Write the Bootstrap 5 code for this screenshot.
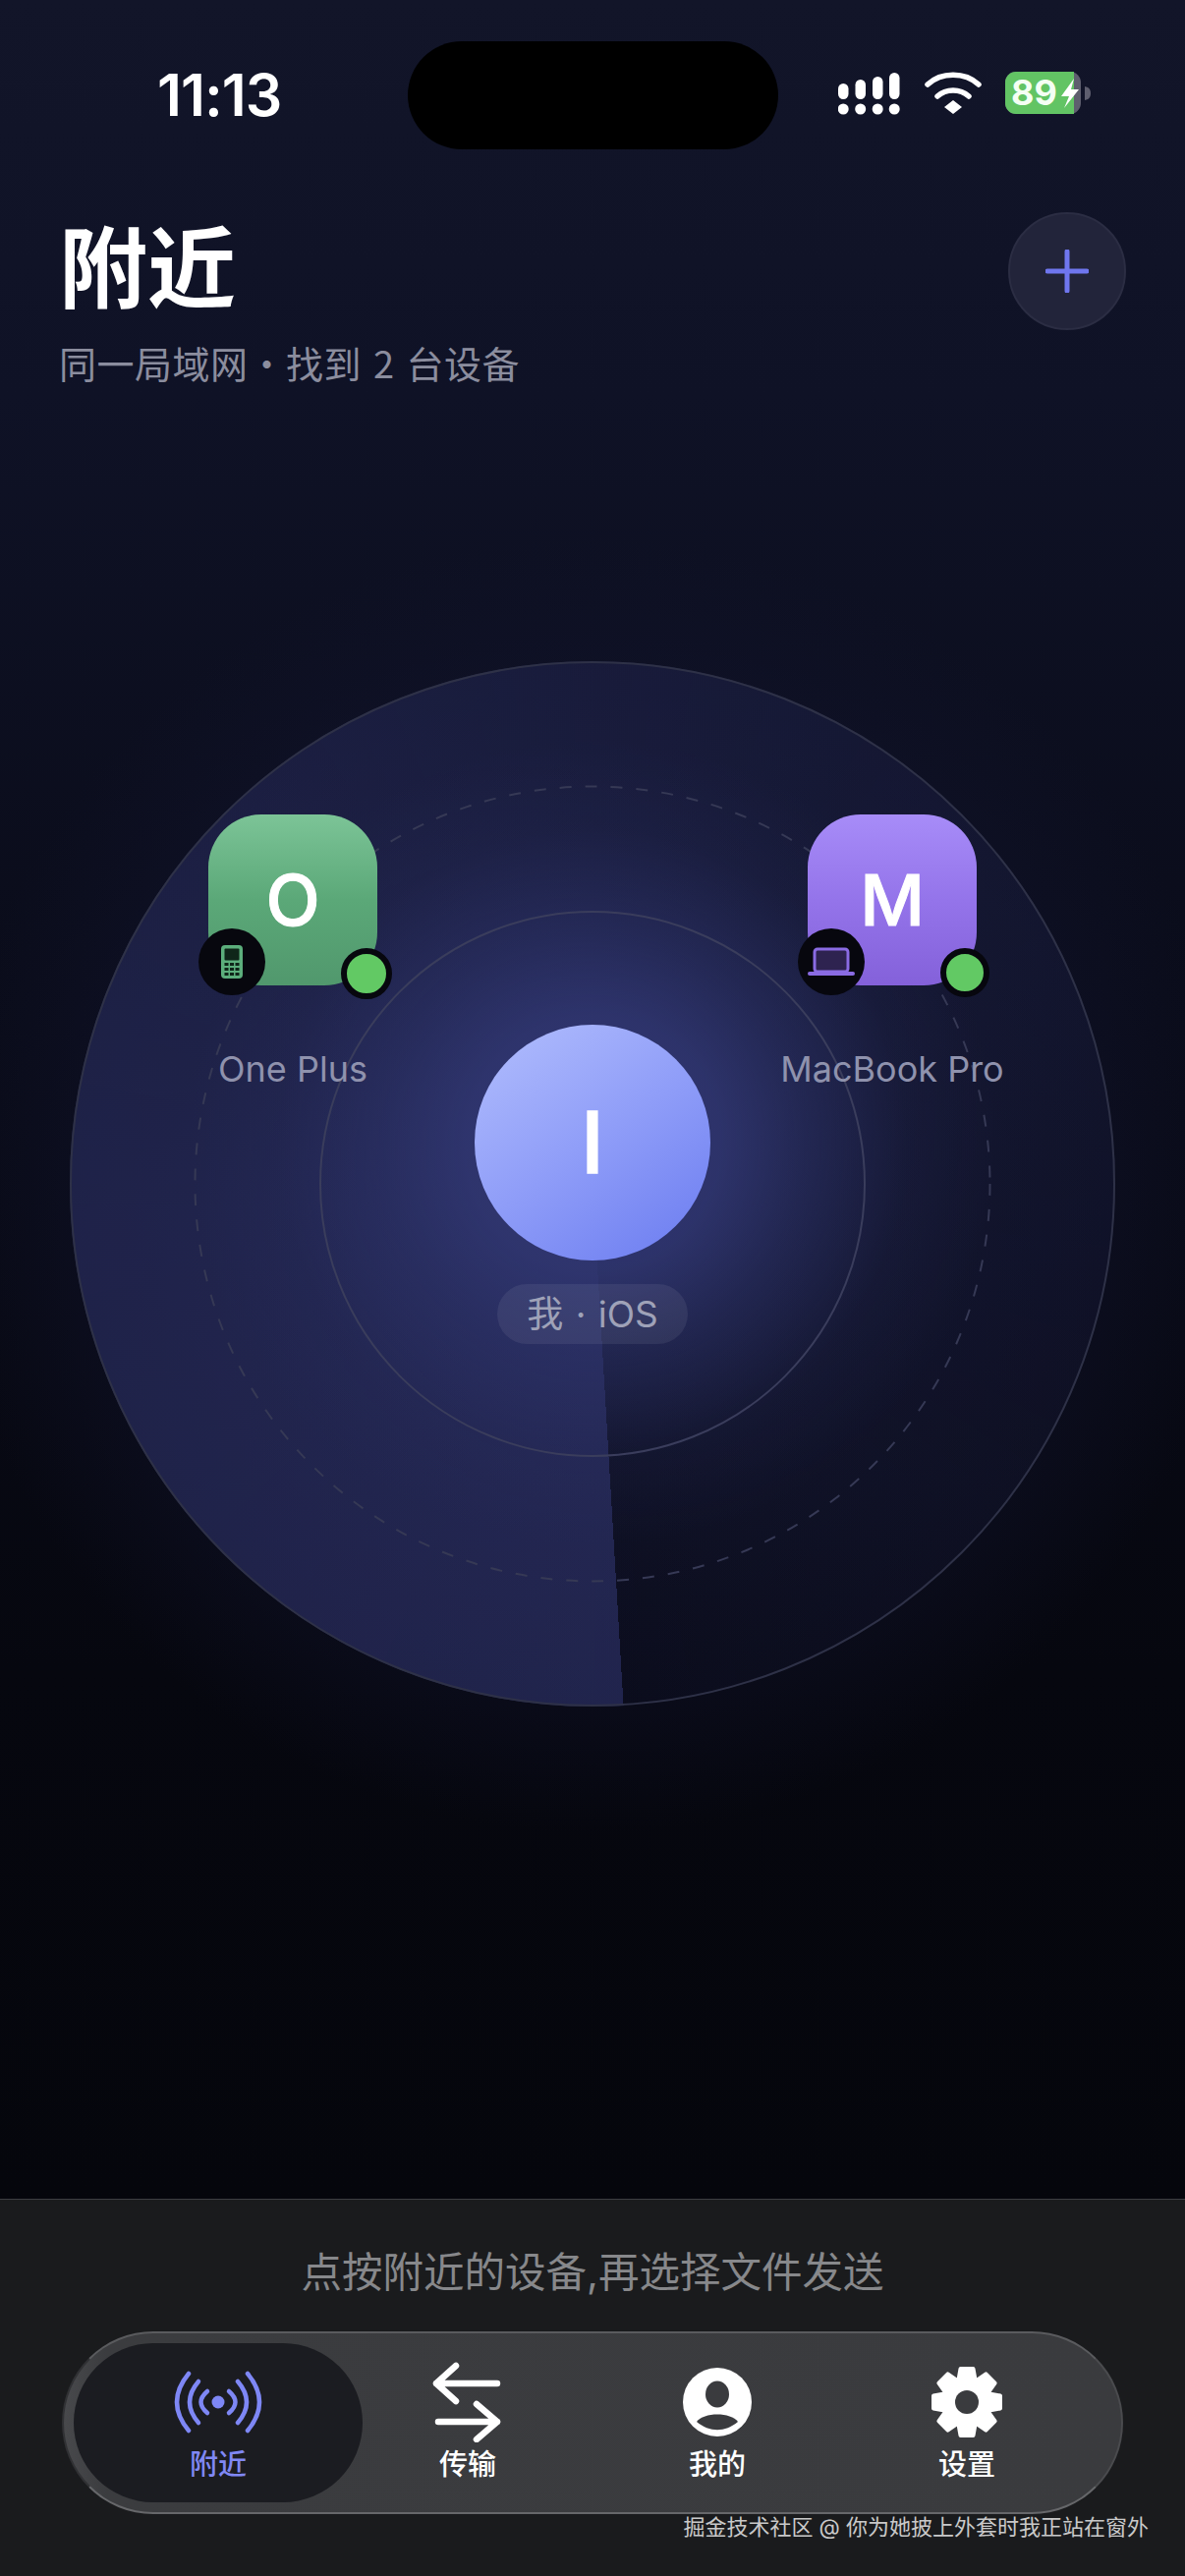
<!doctype html>
<html lang="zh">
<head>
  <meta charset="utf-8">
  <meta name="viewport" content="width=device-width, initial-scale=1">
  <title>附近</title>
  <link href="https://cdn.jsdelivr.net/npm/bootstrap@5.3.0/dist/css/bootstrap.min.css" rel="stylesheet">
  <style>
    html, body { height: 100%; overflow: hidden; }
    body {
      background: #05060c;
      font-family: Inter, "Noto Sans CJK SC", sans-serif;
      color: #fff;
    }
    /* Screen */
    .phone-screen {
      height: 2622px;
      background:
        radial-gradient(circle at 50% 1206px, rgba(30,34,72,.5) 0, rgba(18,20,46,.3) 540px, rgba(5,6,12,0) 660px),
        linear-gradient(180deg, #121529 0, #0f1226 400px, #0a0c1a 1000px, #06070f 1700px, #05060c 2238px);
    }
    /* Status bar */
    .status-row { height: 110px; margin-top: 42px; }
    .status-time { width: 415px; padding-left: 160px; font-size: 59px; font-weight: 600; letter-spacing: -1px; line-height: 110px; margin-top: 0; }
    .island { width: 377px; height: 110px; border-radius: 55px; background: #000; }
    .status-icons { padding-left: 61px; gap: 23px; margin-top: -4px; }
    /* Header */
    .head-row { padding: 64px 60px 0 60px; }
    .head-title { font-size: 90px; font-weight: 700; line-height: 116px; margin: 0; }
    .head-sub { font-family: "Noto Sans CJK SC", sans-serif; font-size: 38px; line-height: 50px; color: #8b8d9e; margin-top: 12px; letter-spacing: .5px; word-spacing: 3px; }
    .add-btn { width: 120px; height: 120px; border-radius: 50%; background: #22243a; border: 2px solid #2b2d43; padding: 0; }
    /* Radar */
    .radar-main { flex: 1 1 auto; min-height: 0; }
    .radar-stage { width: 1064px; height: 1064px; margin: 279px auto 0; position: relative; }
    .radar-disk {
      position: absolute; inset: 0; border-radius: 50%;
      background:
        radial-gradient(circle at 50% 490px, rgba(50,56,118,.95) 0, rgba(48,54,112,.9) 130px, rgba(46,52,108,.55) 215px, rgba(46,52,108,.12) 320px, rgba(46,52,108,0) 410px),
        conic-gradient(from 176.6deg, rgba(66,72,150,.42) 0, rgba(66,72,150,.36) 25%, rgba(66,72,150,.14) 60%, rgba(66,72,150,.03) 100%);
    }
    .radar-rings { position: absolute; inset: 0; }
    .dev-node { position: absolute; top: 156px; width: 172px; }
    .dev-oneplus { left: 141px; }
    .dev-mac { left: 751px; }
    .dev-tile {
      width: 172px; height: 174px; border-radius: 54px; font-size: 72px; font-weight: 500; line-height: 1; -webkit-text-stroke: 1px #fff;
    }
    .tile-green { background: linear-gradient(180deg, #7cc497 0, #5ba878 50%, #51986d 100%); }
    .tile-purple { background: linear-gradient(180deg, #a78cf8 0, #9474ea 50%, #8461da 100%); }
    .dev-kind {
      position: absolute; top: 116px; left: -10px; width: 68px; height: 68px; border-radius: 50%; background: #07070e;
    }
    .dev-online {
      position: absolute; top: 136px; left: 135px; width: 52px; height: 52px; border-radius: 50%; background: #62c964; border: 6px solid #07070e;
    }
    .dev-mac .dev-online { left: 135px; width: 50px; height: 50px; }
    .dev-label {
      position: absolute; top: 237px; left: -60px; right: -60px; text-align: center; font-size: 36px; line-height: 44px; color: #8f92ad; white-space: nowrap;
    }
    .me-node { position: absolute; top: 370px; left: 0; right: 0; }
    .me-avatar {
      width: 240px; height: 240px; border-radius: 50%; font-size: 86px; font-weight: 500; -webkit-text-stroke: 1.5px #fff;
      background: linear-gradient(145deg, #b2befd 0, #8f9df8 50%, #6a7bf0 100%);
    }
    .me-pill {
      margin-top: 24px; width: 194px; height: 61px; border-radius: 31px; background: rgba(255,255,255,.07); color: #9fa2b8; font-size: 37px; line-height: 1; word-spacing: 2px;
    }
    /* Bottom panel */
    .bottom-panel { height: 384px; flex: none; background: #1a1b1d; border-top: 1px solid #3d3e42; position: relative; }
    .hint-line { text-align: center; font-size: 41.5px; line-height: 48px; color: #87888b; padding-top: 50px; height: 134px; }
    .tab-pill {
      margin: 0 63px; height: 186px; border-radius: 93px; padding: 12px 30px;
      background: linear-gradient(90deg, #48494c 0, #3b3c3f 4%, #3a3b3e 100%);
      border: 2px solid #5a5b5e; border-left-color: #303134; border-bottom-color: #66676a; border-right-color: #4a4b4e;
    }
    .tab-item { flex: 1 1 0; position: relative; padding-top: 17px; font-size: 29px; font-weight: 500; line-height: 34px; color: #fff; }
    .tab-item svg { position: relative; display: block; }
    .tab-item span { position: relative; margin-top: 6px; }
    .tab-item.is-active { color: #8088f5; }
    .tab-item.is-active::before {
      content: ""; position: absolute; inset: -2px -20px; border-radius: 81px; background: #1b1c21;
    }
    .water-mark { position: absolute; top: 320px; right: 37px; font-size: 22px; line-height: 26px; color: #c9c9c9; white-space: nowrap; }
  </style>
</head>
<body>
  <div class="phone-screen d-flex flex-column">
    <!-- Status bar -->
    <div class="status-row d-flex flex-shrink-0 align-items-center">
      <div class="status-time">11:13</div>
      <div class="island"></div>
      <div class="status-icons d-flex align-items-center">
        <svg width="64" height="44" viewBox="0 0 64 44" fill="#fff">
          <rect x="0" y="12" width="10.5" height="16" rx="5.2"/><rect x="17.5" y="8" width="10.5" height="20" rx="5.2"/><rect x="35" y="5" width="10.5" height="23" rx="5.2"/><rect x="52" y="1" width="10.5" height="27" rx="5.2"/>
          <circle cx="5.2" cy="38" r="5.5"/><circle cx="22.7" cy="38" r="5.5"/><circle cx="40.2" cy="38" r="5.5"/><circle cx="57.2" cy="38" r="5.5"/>
        </svg>
        <svg width="60" height="44" viewBox="0 0 60 44" fill="none" stroke="#fff" stroke-linecap="round" stroke-width="5.5">
          <path d="M4 13 C18 0 42 0 56 13"/>
          <path d="M14 25 C23 17 37 17 46 25"/>
          <path d="M30 29 L39 36 L30 43 L21 36 Z" fill="#fff" stroke="none"/>
        </svg>
        <svg class="ms-0" width="88" height="44" viewBox="0 0 88 44">
          <rect x="0" y="0" width="77" height="43" rx="11" fill="#5e5e6e"/>
          <path d="M11 0 H70 V43 H11 A11 11 0 0 1 0 32 V11 A11 11 0 0 1 11 0 Z" fill="#62c464"/>
          <path d="M81 15 C86 16 87 19 87 22 C87 25 86 28 81 29 Z" fill="#5e5e6e"/>
          <text x="6" y="34" font-family="Inter, sans-serif" font-size="36" font-weight="700" fill="#f4fff4">89</text>
          <path d="M70 7 L57 25 H65 L60 37 L75 18 H67 Z" fill="#fff"/>
        </svg>
      </div>
    </div>

    <!-- Header -->
    <header class="head-row d-flex justify-content-between flex-shrink-0">
      <div>
        <h1 class="head-title">附近</h1>
        <div class="head-sub">同一局域网·找到 2 台设备</div>
      </div>
      <button class="add-btn btn d-flex align-items-center justify-content-center" type="button" aria-label="添加">
        <svg width="44" height="44" viewBox="0 0 44 44" stroke="#6f76ee" stroke-width="5" stroke-linecap="round"><path d="M22 2 V42 M2 22 H42"/></svg>
      </button>
    </header>

    <!-- Radar -->
    <main class="radar-main">
      <div class="radar-stage">
        <div class="radar-disk"></div>
        <svg class="radar-rings" viewBox="0 0 1064 1064" fill="none">
          <circle cx="532" cy="532" r="531" stroke="#2e3147" stroke-width="2"/>
          <circle cx="532" cy="532" r="404.5" stroke="#363955" stroke-width="2" stroke-dasharray="12 14"/>
          <circle cx="532" cy="532" r="277" stroke="#3a3d5c" stroke-width="2"/>
        </svg>

        <div class="dev-node dev-oneplus">
          <div class="dev-tile tile-green d-flex align-items-center justify-content-center">O</div>
          <div class="dev-kind d-flex align-items-center justify-content-center">
            <svg width="24" height="36" viewBox="0 0 24 36">
              <rect x="1" y="1" width="22" height="34" rx="4" fill="#5cae7c"/>
              <rect x="4.5" y="4.5" width="15" height="12" rx="1" fill="#0f2519"/>
              <g fill="#0f2519"><rect x="4.5" y="19" width="4" height="3"/><rect x="10" y="19" width="4" height="3"/><rect x="15.5" y="19" width="4" height="3"/><rect x="4.5" y="24" width="4" height="3"/><rect x="10" y="24" width="4" height="3"/><rect x="15.5" y="24" width="4" height="3"/><rect x="4.5" y="29" width="4" height="3"/><rect x="10" y="29" width="4" height="3"/><rect x="15.5" y="29" width="4" height="3"/></g>
            </svg>
          </div>
          <div class="dev-online"></div>
          <div class="dev-label">One Plus</div>
        </div>

        <div class="dev-node dev-mac">
          <div class="dev-tile tile-purple d-flex align-items-center justify-content-center">M</div>
          <div class="dev-kind d-flex align-items-center justify-content-center">
            <svg width="48" height="30" viewBox="0 0 48 30">
              <rect x="7" y="2" width="34" height="23" rx="3" fill="#2e2350" stroke="#8a6be3" stroke-width="3"/>
              <rect x="0" y="25" width="48" height="4" rx="2" fill="#8a6be3"/>
            </svg>
          </div>
          <div class="dev-online"></div>
          <div class="dev-label">MacBook Pro</div>
        </div>

        <div class="me-node d-flex flex-column align-items-center">
          <div class="me-avatar d-flex align-items-center justify-content-center">I</div>
          <div class="me-pill d-flex align-items-center justify-content-center">我 · iOS</div>
        </div>
      </div>
    </main>

    <!-- Bottom panel -->
    <footer class="bottom-panel">
      <div class="hint-line">点按附近的设备,再选择文件发送</div>
      <nav class="tab-pill d-flex">
        <div class="tab-item is-active d-flex flex-column align-items-center">
          <svg width="96" height="82" viewBox="-48 -41 96 82" fill="none" stroke="#7e87f5" stroke-width="4.5" stroke-linecap="round">
            <circle cx="0" cy="0" r="6.5" fill="#7e87f5" stroke="none"/>
            <path d="M-11 -11 Q-24 0 -11 11"/><path d="M11 -11 Q24 0 11 11"/>
            <path d="M-20 -21 Q-38 0 -20 21"/><path d="M20 -21 Q38 0 20 21"/>
            <path d="M-30 -29 Q-54 0 -30 29"/><path d="M30 -29 Q54 0 30 29"/>
          </svg>
          <span>附近</span>
        </div>
        <div class="tab-item d-flex flex-column align-items-center">
          <svg width="72" height="82" viewBox="0 0 72 82" fill="none" stroke="#fff" stroke-width="6.5" stroke-linecap="round" stroke-linejoin="round">
            <path d="M66 22 H4 M24 4 L4 22 L24 40"/>
            <path d="M6 61 H66 M45 43 L66 61 L45 79"/>
          </svg>
          <span>传输</span>
        </div>
        <div class="tab-item d-flex flex-column align-items-center">
          <svg width="72" height="82" viewBox="-36 -41 72 82">
            <circle cx="0" cy="0" r="35" fill="#fff"/>
            <ellipse cx="0" cy="-8" rx="12" ry="13.5" fill="#3a3b3e"/>
            <path d="M-21 20 C-14 10 14 10 21 20 C8 31 -8 31 -21 20 Z" fill="#3a3b3e"/>
          </svg>
          <span>我的</span>
        </div>
        <div class="tab-item d-flex flex-column align-items-center">
          <svg width="76" height="82" viewBox="-38 -41 76 82">
            <defs><path id="gearTooth" d="M-6.5 -34 H6.5 L9 -20 H-9 Z" fill="#fff" stroke="#fff" stroke-width="4" stroke-linejoin="round"/></defs>
            <circle r="26" fill="#fff"/>
            <use href="#gearTooth"/><use href="#gearTooth" transform="rotate(45)"/><use href="#gearTooth" transform="rotate(90)"/><use href="#gearTooth" transform="rotate(135)"/><use href="#gearTooth" transform="rotate(180)"/><use href="#gearTooth" transform="rotate(225)"/><use href="#gearTooth" transform="rotate(270)"/><use href="#gearTooth" transform="rotate(315)"/>
            <circle r="12" fill="#3a3b3e"/>
          </svg>
          <span>设置</span>
        </div>
      </nav>
      <div class="water-mark">掘金技术社区 @ 你为她披上外套时我正站在窗外</div>
    </footer>
  </div>

  <script src="https://cdn.jsdelivr.net/npm/bootstrap@5.3.0/dist/js/bootstrap.bundle.min.js"></script>
</body>
</html>
